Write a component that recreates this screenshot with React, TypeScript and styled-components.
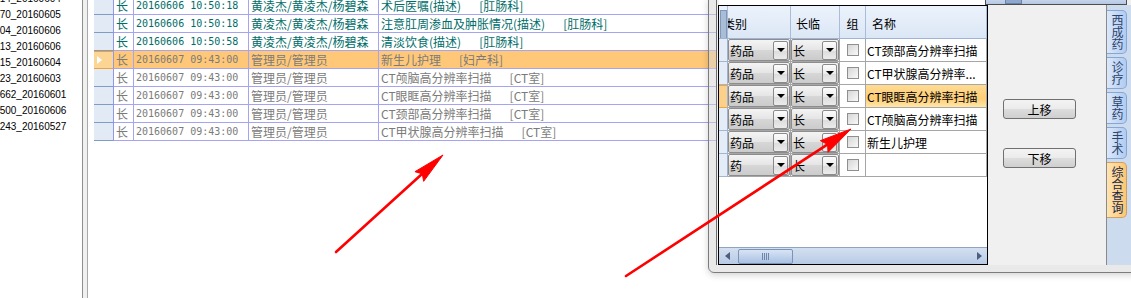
import styled, { createGlobalStyle } from "styled-components";

const GlobalStyle = createGlobalStyle`
  html, body {
    margin: 0;
    padding: 0;
    background: #fff;
    overflow: hidden;
  }
  body {
    font-family: "Noto Sans CJK SC", "Liberation Sans", sans-serif;
    font-size: 12px;
    color: #000;
  }
`;

const Screen = styled.div`
  position: relative;
  display: flex;
  width: 1131px;
  height: 298px;
  overflow: hidden;
  background: #fff;
`;

/* ---- left file list ---- */
const FileList = styled.div`
  width: 82px;
  flex-shrink: 0;
  overflow: hidden;
`;

const FileLines = styled.div`
  margin: -9px 0 0 -17px;
`;

const FileLine = styled.div`
  font-family: "Liberation Sans", Arial, sans-serif;
  font-size: 10px;
  line-height: 16px;
  white-space: nowrap;
`;

const Splitter = styled.div`
  width: 6px;
  flex-shrink: 0;
  box-sizing: border-box;
  border-left: 1px solid #8e8e8e;
  border-right: 1px solid #a9a9a9;
  background: #f0f0f0;
`;

/* ---- main order grid ---- */
const OrderGrid = styled.div`
  flex: 1;
  padding-left: 6px;
  overflow: hidden;
`;

const OrderRows = styled.div`
  margin-top: -3px;
`;

const OrderRow = styled.div<{ $tone: "teal" | "gray"; $active?: boolean }>`
  display: grid;
  grid-template-columns: 20px 20px 115px 130px 1fr;
  height: 18px;
  color: ${(p) => (p.$tone === "teal" ? "#006d69" : "#7b7b7b")};
  background: ${(p) => (p.$active ? "#ffc878" : "#fff")};
`;

const RowHead = styled.div<{ $active?: boolean }>`
  box-sizing: border-box;
  display: flex;
  align-items: center;
  padding-left: 3px;
  background: ${(p) => (p.$active ? "#fcd594" : "#e2eaf6")};
  border-top: ${(p) => (p.$active ? "1px solid #f0a23a" : "none")};
  border-bottom: 1px solid ${(p) => (p.$active ? "#f0a23a" : "#7f9cc2")};
  border-right: 1px solid #8f98ea;
`;

const RowPointer = styled.span`
  width: 0;
  height: 0;
  border-top: 4px solid transparent;
  border-bottom: 4px solid transparent;
  border-left: 5px solid #fff;
`;

const Cell = styled.div<{ $mono?: boolean }>`
  box-sizing: border-box;
  padding-left: 2px;
  border-right: 1px solid #a4a4f2;
  border-bottom: 1px solid #a4a4f2;
  line-height: 17px;
  white-space: pre;
  overflow: hidden;
  font-family: ${(p) => (p.$mono ? '"DejaVu Sans Mono", monospace' : "inherit")};
  font-size: ${(p) => (p.$mono ? "10px" : "12px")};
`;

const Dept = styled.span`
  margin-left: 18px;
`;

/* ---- dialog window ---- */
const Dialog = styled.div`
  position: absolute;
  left: 708px;
  top: -2px;
  width: 440px;
  height: 275px;
  box-sizing: border-box;
  display: flex;
  padding: 0 0 7px 7px;
  border: 1px solid #7c7c7c;
  border-radius: 0 0 0 6px;
  background: rgba(212, 212, 212, 0.5);
  box-shadow: 0 2px 7px rgba(0, 0, 0, 0.18);
`;

const Client = styled.div`
  flex: 1;
  display: flex;
  flex-direction: column;
  border-left: 1px solid #6f6f6f;
  background: #f0f0f0;
`;

const TopStrip = styled.div`
  display: flex;
  height: 6px;
  padding-left: 2px;
`;

const TopBlank = styled.div`
  width: 266px;
  background: #fff;
`;

const TopBar = styled.div`
  position: relative;
  width: 142px;
  box-sizing: border-box;
  border: 1px solid #4e4e4e;
  border-top: none;
  background: linear-gradient(#c9d8ec, #b4c8e4);
`;

const TopThumb = styled.div`
  position: absolute;
  left: 19px;
  top: 0;
  bottom: 0;
  width: 15px;
  background: #8fa8cd;
  border: 1px solid #6d84aa;
  border-top: none;
`;

const Body = styled.div`
  display: flex;
  height: 260px;
  padding-left: 1px;
`;

const DCols = "9px 63px 49px 26px 121px";

const DGrid = styled.div`
  width: 270px;
  flex-shrink: 0;
  box-sizing: border-box;
  display: flex;
  flex-direction: column;
  border: 1px solid #000;
  background: #fff;
`;

const DHeader = styled.div`
  display: grid;
  grid-template-columns: ${DCols};
  height: 33px;
  box-sizing: border-box;
  border-bottom: 1px solid #9fb4d2;
  background: linear-gradient(#ebf2fb, #dce7f6);
`;

const DHeadCell = styled.div<{ $indent?: number; $center?: boolean }>`
  box-sizing: border-box;
  display: flex;
  align-items: center;
  justify-content: ${(p) => (p.$center ? "center" : "flex-start")};
  padding: 3px 0 0 ${(p) => (p.$indent && p.$indent > 0 ? p.$indent : 0)}px;
  text-indent: ${(p) => (p.$indent && p.$indent < 0 ? p.$indent : 0)}px;
  border-right: 1px solid #a9bcd8;
  overflow: hidden;
  white-space: nowrap;
`;

const CornerGrip = styled.div`
  width: 6px;
  height: 28px;
  margin: 2px 0 0 1px;
  border: 1px solid #8097b8;
  background: #a9bdd7;
`;

const DRow = styled.div`
  display: grid;
  grid-template-columns: ${DCols};
  height: 23px;
`;

const DRowHead = styled.div<{ $active?: boolean }>`
  box-sizing: border-box;
  background: ${(p) => (p.$active ? "#fbd08a" : "#e4ecf7")};
  border-top: ${(p) => (p.$active ? "1px solid #f2a53c" : "none")};
  border-bottom: 1px solid ${(p) => (p.$active ? "#f2a53c" : "#a2b6d2")};
  border-right: 1px solid #9fb3cf;
`;

const DCell = styled.div<{ $active?: boolean }>`
  box-sizing: border-box;
  display: flex;
  align-items: center;
  border-right: 1px solid #a6a6a6;
  border-bottom: 1px solid #a6a6a6;
  overflow: hidden;
  white-space: nowrap;
  background: ${(p) =>
    p.$active ? "linear-gradient(#ffdc94, #ffcd76 62%, #ffe7aa)" : "transparent"};
`;

const NameText = styled.span`
  padding-left: 1px;
`;

const Combo = styled.div`
  width: 100%;
  height: 100%;
  box-sizing: border-box;
  display: flex;
  align-items: center;
  padding-left: 1px;
  border: 1px solid #8d8d8d;
  border-radius: 2px;
  background: linear-gradient(#f4f4f4, #e5e5e5 50%, #d7d7d7 51%, #cbcbcb);
`;

const ComboButton = styled.div`
  margin: 0 1px 0 auto;
  width: 15px;
  height: 19px;
  box-sizing: border-box;
  display: flex;
  align-items: center;
  justify-content: center;
  border: 1px solid #8a8a8a;
  border-radius: 2px;
  background: linear-gradient(#fcfcfc, #ececec 50%, #dcdcdc 51%, #ebebeb);
`;

const Caret = styled.span`
  width: 0;
  height: 0;
  border-left: 4px solid transparent;
  border-right: 4px solid transparent;
  border-top: 4px solid #000;
`;

const CheckBox = styled.span`
  width: 12px;
  height: 12px;
  margin-left: 7px;
  box-sizing: border-box;
  border: 1px solid #8e8f8f;
  background: linear-gradient(135deg, #d6d6d6, #f9f9f9);
`;

const Filler = styled.div`
  flex: 1;
`;

const HScroll = styled.div`
  height: 17px;
  box-sizing: border-box;
  display: flex;
  align-items: center;
  padding: 0 5px 0 6px;
  border-top: 1px solid #8ea4c3;
  background: linear-gradient(#d4e0f1, #b7cae5);
`;

const ScrollArrow = styled.span<{ $dir: "left" | "right" }>`
  width: 0;
  height: 0;
  border-top: 4px solid transparent;
  border-bottom: 4px solid transparent;
  ${(p) =>
    p.$dir === "left"
      ? "border-right: 5px solid #4d5e80;"
      : "border-left: 5px solid #4d5e80; margin-left: auto;"}
`;

const ScrollThumb = styled.div`
  width: 55px;
  height: 15px;
  margin-left: 8px;
  box-sizing: border-box;
  display: flex;
  align-items: center;
  justify-content: center;
  gap: 1px;
  border: 1px solid #7c93b7;
  border-radius: 2px;
  background: linear-gradient(#d8e4f4, #aac1e3);
`;

const GripLine = styled.span`
  width: 1px;
  height: 7px;
  background: #6f86ac;
`;

const SidePanel = styled.div`
  width: 118px;
  flex-shrink: 0;
  display: flex;
  flex-direction: column;
  gap: 29px;
  padding: 94px 0 0 15px;
  box-sizing: border-box;
  background: #f0f0f0;
`;

const PanelButton = styled.button`
  width: 73px;
  height: 20px;
  padding: 0;
  border: 1px solid #707070;
  border-radius: 3px;
  background: linear-gradient(#f3f3f3, #ebebeb 50%, #dddddd 51%, #cfcfcf);
  font-family: "Noto Sans CJK SC", sans-serif;
  font-size: 12px;
  color: #000;
`;

const TabStrip = styled.div`
  flex: 1;
  display: flex;
  flex-direction: column;
  gap: 3px;
  padding-top: 5px;
  border-left: 1px solid #8a8a8a;
  background: #cddbef;
`;

const SideTab = styled.div<{ $active?: boolean }>`
  width: 20px;
  box-sizing: border-box;
  padding: 3px 0;
  writing-mode: vertical-rl;
  text-orientation: upright;
  line-height: 18px;
  font-size: 12px;
  border: 1px solid ${(p) => (p.$active ? "#d29f5c" : "#88a6d2")};
  border-left: none;
  border-radius: 0 5px 5px 0;
  color: ${(p) => (p.$active ? "#14284a" : "#2d4569")};
  background: ${(p) =>
    p.$active
      ? "linear-gradient(to right, #ffe4b2, #fcc675)"
      : "linear-gradient(to right, #dae8fb, #b1cbf2)"};
`;

/* ---- red annotation arrows ---- */
const Overlay = styled.svg`
  position: absolute;
  left: 0;
  top: 0;
  pointer-events: none;
`;

type Pt = [number, number];

function Arrow({ tail, tip, len, half }: { tail: Pt; tip: Pt; len: number; half: number }) {
  const dx = tip[0] - tail[0];
  const dy = tip[1] - tail[1];
  const d = Math.hypot(dx, dy);
  const ux = dx / d;
  const uy = dy / d;
  const bx = tip[0] - ux * len;
  const by = tip[1] - uy * len;
  const nx = -uy;
  const ny = ux;
  const pts = [
    `${tip[0]},${tip[1]}`,
    `${bx + nx * half},${by + ny * half}`,
    `${bx + ux * 4},${by + uy * 4}`,
    `${bx - nx * half},${by - ny * half}`,
  ].join(" ");
  return (
    <g fill="#ff0000" stroke="#ff0000">
      <line x1={tail[0]} y1={tail[1]} x2={bx + ux * 4} y2={by + uy * 4} strokeWidth={2.6} strokeLinecap="round" />
      <polygon points={pts} strokeWidth={1} strokeLinejoin="round" />
    </g>
  );
}

const files = [
  "12314_20160604",
  "12370_20160605",
  "12304_20160606",
  "12313_20160606",
  "12315_20160604",
  "12323_20160603",
  "123662_20160601",
  "123500_20160606",
  "123243_20160527",
];

const orders = [
  { time: "20160606 10:50:18", who: "黄凌杰/黄凌杰/杨碧森", text: "术后医嘱(描述)", dept: "[肛肠科]", tone: "teal" as const },
  { time: "20160606 10:50:18", who: "黄凌杰/黄凌杰/杨碧森", text: "注意肛周渗血及肿胀情况(描述)", dept: "[肛肠科]", tone: "teal" as const },
  { time: "20160606 10:50:58", who: "黄凌杰/黄凌杰/杨碧森", text: "清淡饮食(描述)", dept: "[肛肠科]", tone: "teal" as const },
  { time: "20160607 09:43:00", who: "管理员/管理员", text: "新生儿护理", dept: "[妇产科]", tone: "gray" as const, active: true },
  { time: "20160607 09:43:00", who: "管理员/管理员", text: "CT颅脑高分辨率扫描", dept: "[CT室]", tone: "gray" as const },
  { time: "20160607 09:43:00", who: "管理员/管理员", text: "CT眼眶高分辨率扫描", dept: "[CT室]", tone: "gray" as const },
  { time: "20160607 09:43:00", who: "管理员/管理员", text: "CT颈部高分辨率扫描", dept: "[CT室]", tone: "gray" as const },
  { time: "20160607 09:43:00", who: "管理员/管理员", text: "CT甲状腺高分辨率扫描", dept: "[CT室]", tone: "gray" as const },
];

const picks = [
  { kind: "药品", name: "CT颈部高分辨率扫描" },
  { kind: "药品", name: "CT甲状腺高分辨率..." },
  { kind: "药品", name: "CT眼眶高分辨率扫描", active: true },
  { kind: "药品", name: "CT颅脑高分辨率扫描" },
  { kind: "药品", name: "新生儿护理" },
  { kind: "药", name: "" },
];

const tabs = ["西成药", "诊疗", "草药", "手术", "综合查询"];

const App = () => {
  return (
    <Screen>
      <GlobalStyle />
      <FileList>
        <FileLines>
          {files.map((f) => (
            <FileLine key={f}>{f}</FileLine>
          ))}
        </FileLines>
      </FileList>
      <Splitter />
      <OrderGrid>
        <OrderRows>
          {orders.map((o, i) => (
            <OrderRow key={i} $tone={o.tone} $active={o.active}>
              <RowHead $active={o.active}>{o.active && <RowPointer />}</RowHead>
              <Cell>长</Cell>
              <Cell $mono>{o.time}</Cell>
              <Cell>{o.who}</Cell>
              <Cell>
                {o.text}
                <Dept>{o.dept}</Dept>
              </Cell>
            </OrderRow>
          ))}
        </OrderRows>
      </OrderGrid>

      <Dialog>
        <Client>
          <TopStrip>
            <TopBlank />
            <TopBar>
              <TopThumb />
            </TopBar>
          </TopStrip>
          <Body>
            <DGrid>
              <DHeader>
                <DHeadCell>
                  <CornerGrip />
                </DHeadCell>
                <DHeadCell $indent={-5}>类别</DHeadCell>
                <DHeadCell $indent={5}>长临</DHeadCell>
                <DHeadCell $center>组</DHeadCell>
                <DHeadCell $indent={6}>名称</DHeadCell>
              </DHeader>
              {picks.map((p, i) => (
                <DRow key={i}>
                  <DRowHead $active={p.active} />
                  <DCell>
                    <Combo>
                      {p.kind}
                      <ComboButton>
                        <Caret />
                      </ComboButton>
                    </Combo>
                  </DCell>
                  <DCell>
                    <Combo>
                      长
                      <ComboButton>
                        <Caret />
                      </ComboButton>
                    </Combo>
                  </DCell>
                  <DCell>
                    <CheckBox />
                  </DCell>
                  <DCell $active={p.active}>
                    <NameText>{p.name}</NameText>
                  </DCell>
                </DRow>
              ))}
              <Filler />
              <HScroll>
                <ScrollArrow $dir="left" />
                <ScrollThumb>
                  <GripLine />
                  <GripLine />
                  <GripLine />
                  <GripLine />
                </ScrollThumb>
                <ScrollArrow $dir="right" />
              </HScroll>
            </DGrid>
            <SidePanel>
              <PanelButton>上移</PanelButton>
              <PanelButton>下移</PanelButton>
            </SidePanel>
            <TabStrip>
              {tabs.map((t) => (
                <SideTab key={t} $active={t === "综合查询"}>
                  {t}
                </SideTab>
              ))}
            </TabStrip>
          </Body>
        </Client>
      </Dialog>

      <Overlay width={1131} height={298}>
        <Arrow tail={[336, 252]} tip={[443, 155]} len={32} half={6.5} />
        <Arrow tail={[626, 276]} tip={[851, 129]} len={32} half={7} />
      </Overlay>
    </Screen>
  );
};

export default App;
